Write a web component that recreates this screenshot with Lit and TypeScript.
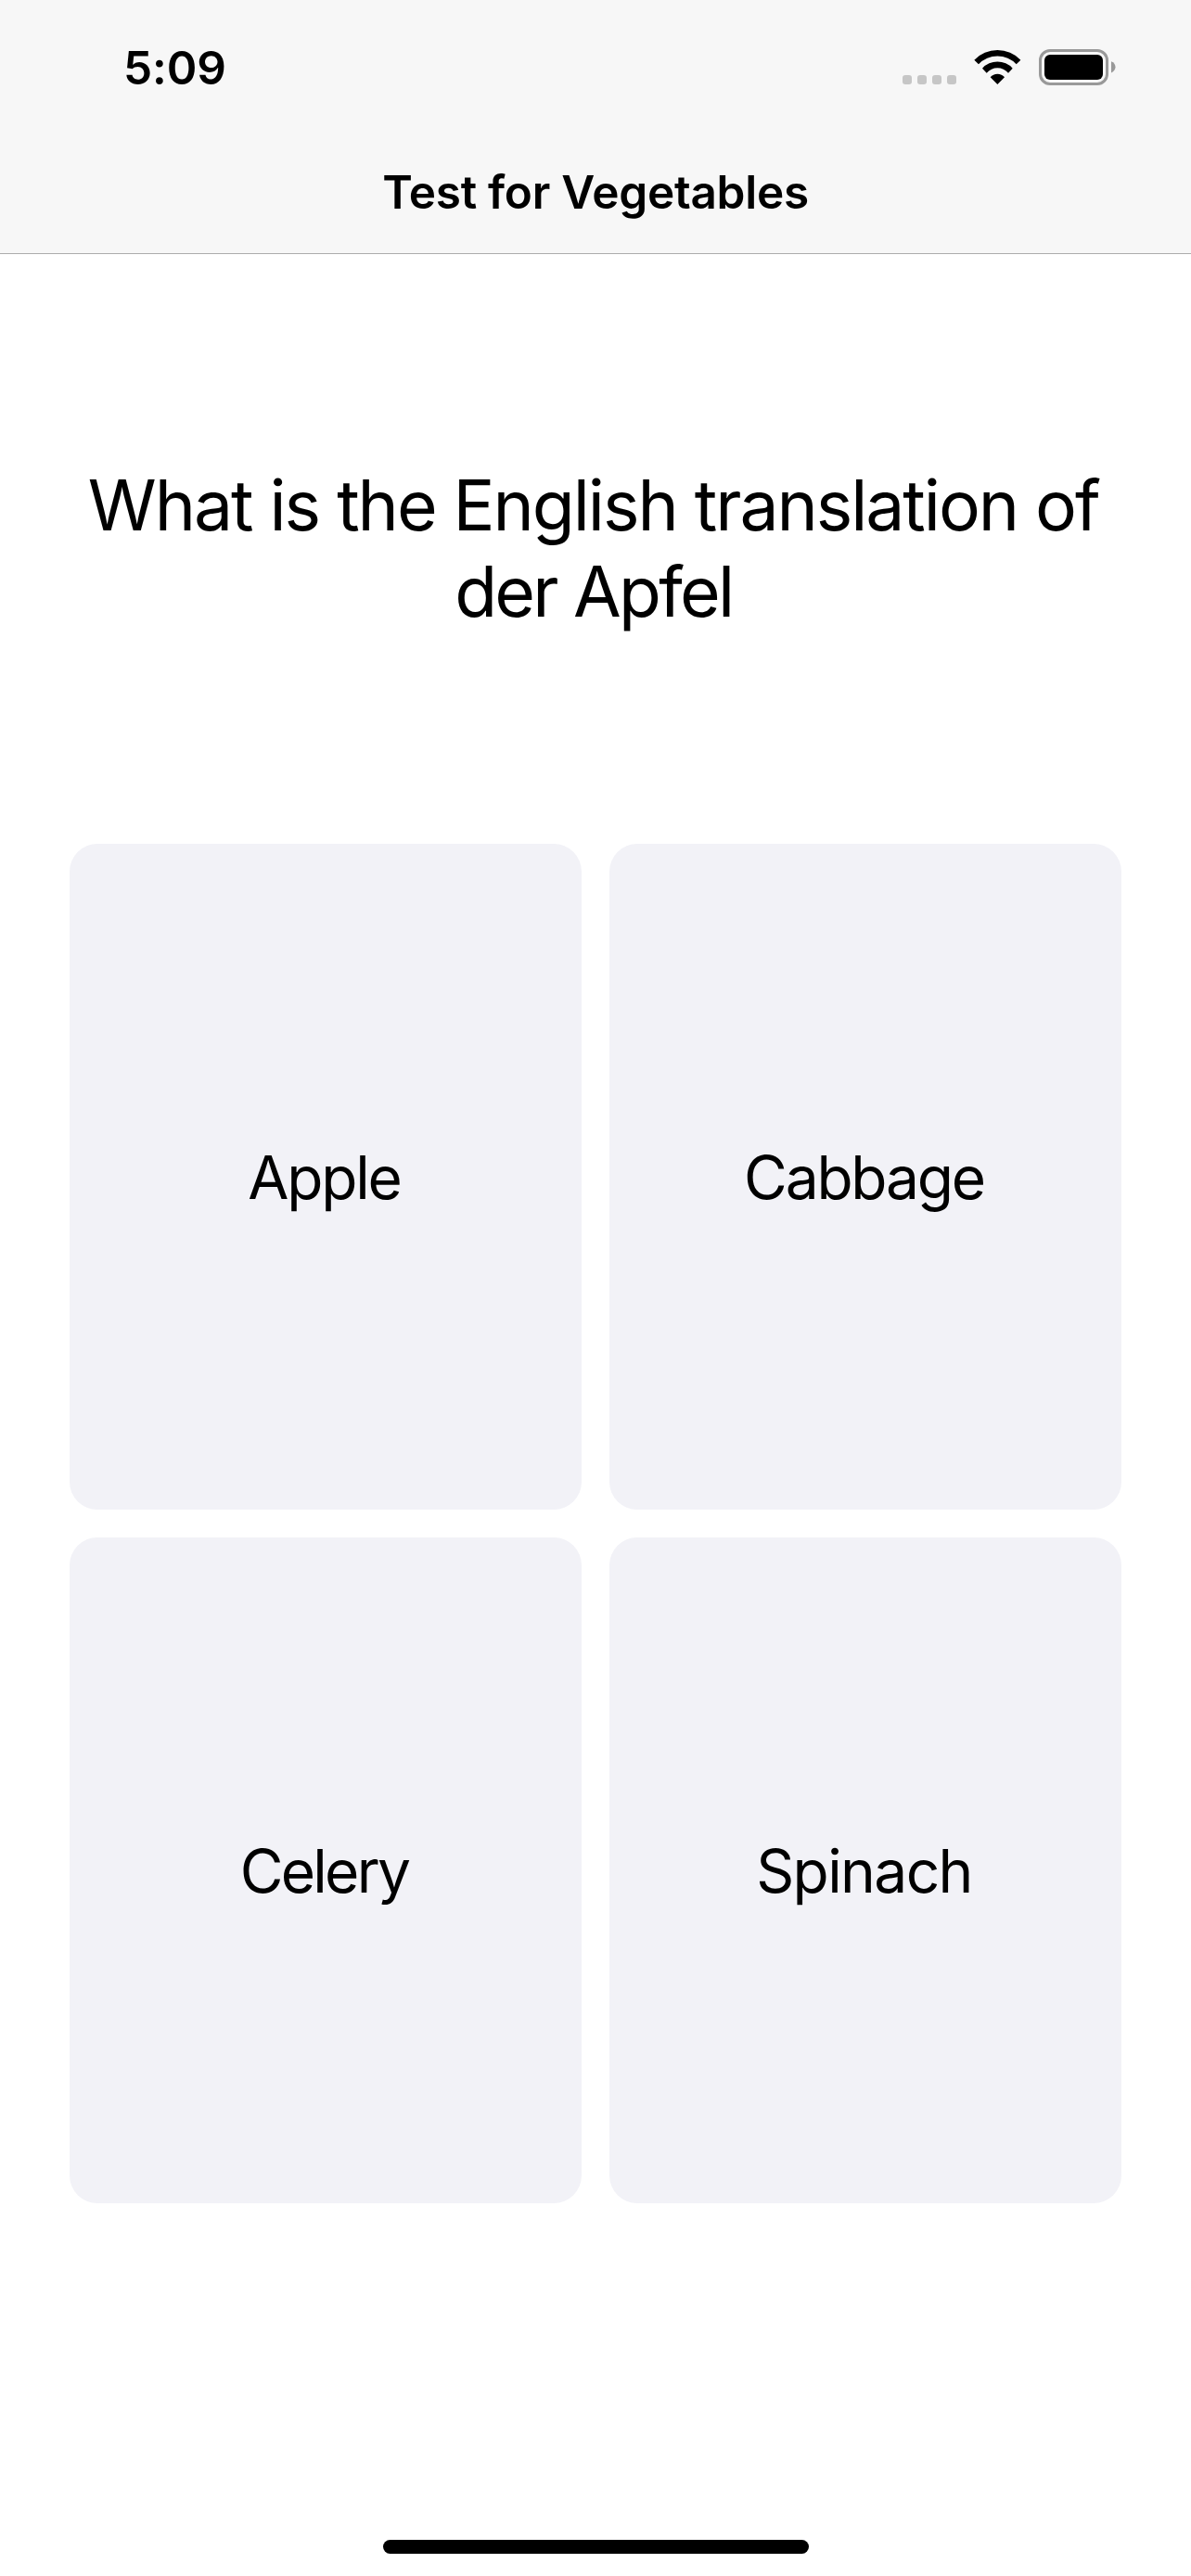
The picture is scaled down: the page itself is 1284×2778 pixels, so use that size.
import { LitElement, html, css } from "lit";
import { customElement, property } from "lit/decorators.js";
import { styleMap } from "lit/directives/style-map.js";

interface Answer {
  label: string;
  tracking: number;
}

@customElement("status-bar")
export class StatusBar extends LitElement {
  static styles = css`
    :host {
      display: flex;
      justify-content: space-between;
      align-items: flex-start;
      box-sizing: border-box;
      height: 141px;
      padding: 43px 81px 0 133px;
    }
    .time {
      font-size: 49.5px;
      line-height: 60px;
      font-weight: 600;
      letter-spacing: -0.1px;
    }
    .icons {
      display: flex;
      align-items: flex-end;
      height: 49px;
    }
    .dots {
      display: flex;
      gap: 6px;
      margin: 0 19.3px 1px 0;
    }
    .dot {
      width: 10px;
      height: 10px;
      border-radius: 3px;
      background: #c6c6c6;
    }
    .wifi {
      display: block;
      width: 50.7px;
      height: 37px;
      margin: 0 19px 1px 0;
    }
    .battery {
      display: block;
      width: 83px;
      height: 39px;
    }
  `;

  @property() time = "";

  render() {
    return html`
      <div class="time">${this.time}</div>
      <div class="icons">
        <div class="dots">
          <div class="dot"></div>
          <div class="dot"></div>
          <div class="dot"></div>
          <div class="dot"></div>
        </div>
        <svg class="wifi" viewBox="271 42 152 111">
          <path d="M272 74A104 104 0 0 1 422 74L408 88A84 84 0 0 0 286 88Z" />
          <path d="M298 101A66.5 66.5 0 0 1 396 101L382 116A46 46 0 0 0 312 116Z" />
          <path d="M324 130A30 30 0 0 1 370 130L347 153Z" />
        </svg>
        <svg class="battery" viewBox="0 0 83 39">
          <rect x="1.5" y="1.5" width="72" height="36" rx="10.5" fill="none" stroke="#999" stroke-width="3" />
          <rect x="6" y="6" width="63" height="27" rx="6" />
          <path d="M78 13.3C84 15.5 84 23.2 78 25.4Z" fill="#999" />
        </svg>
      </div>
    `;
  }
}

@customElement("answer-card")
export class AnswerCard extends LitElement {
  static styles = css`
    :host {
      display: flex;
      align-items: center;
      justify-content: center;
      box-sizing: border-box;
      padding: 1px 3px 0 0;
      border-radius: 30px;
      background: #f2f2f7;
    }
    .label {
      font-size: 64px;
      line-height: 77px;
      white-space: nowrap;
    }
  `;

  @property() label = "";
  @property({ type: Number }) tracking = 0;

  render() {
    return html`<div class="label" style=${styleMap({ letterSpacing: `${this.tracking}px` })}>${this.label}</div>`;
  }
}

@customElement("app-root")
export class AppRoot extends LitElement {
  static styles = css`
    :host {
      display: flex;
      flex-direction: column;
      box-sizing: border-box;
      width: 1284px;
      height: 2778px;
      font-family: Inter, "Liberation Sans", sans-serif;
      color: #000;
      background: #fff;
    }
    .header {
      box-sizing: border-box;
      height: 274px;
      background: #f7f7f7;
      border-bottom: 1px solid #acacac;
    }
    .title {
      padding-top: 36px;
      text-align: center;
      font-size: 49.5px;
      line-height: 60px;
      font-weight: 600;
      letter-spacing: -0.26px;
    }
    .question {
      height: 412px;
      padding: 224px 4.5px 0 0;
      text-align: center;
      font-size: 75px;
      line-height: 93px;
      letter-spacing: -2.07px;
      white-space: nowrap;
    }
    .term {
      letter-spacing: -2.78px;
    }
    .answers {
      display: grid;
      grid-template-columns: 552px 552px;
      grid-template-rows: 718px 718px;
      gap: 30px;
      padding-left: 75px;
    }
    .home {
      width: 459px;
      height: 15px;
      margin: auto 0 24px 413px;
      border-radius: 7.5px;
      background: #000;
    }
  `;

  private answers: Answer[] = [
    { label: "Apple", tracking: -2.2 },
    { label: "Cabbage", tracking: -2.2 },
    { label: "Celery", tracking: -2.7 },
    { label: "Spinach", tracking: -1.6 },
  ];

  render() {
    return html`
      <div class="header">
        <status-bar time="5:09"></status-bar>
        <div class="title">Test for Vegetables</div>
      </div>
      <div class="question">
        <div>What is the English translation of</div>
        <div class="term">der Apfel</div>
      </div>
      <div class="answers">
        ${this.answers.map((a) => html`<answer-card .label=${a.label} .tracking=${a.tracking}></answer-card>`)}
      </div>
      <div class="home"></div>
    `;
  }
}
